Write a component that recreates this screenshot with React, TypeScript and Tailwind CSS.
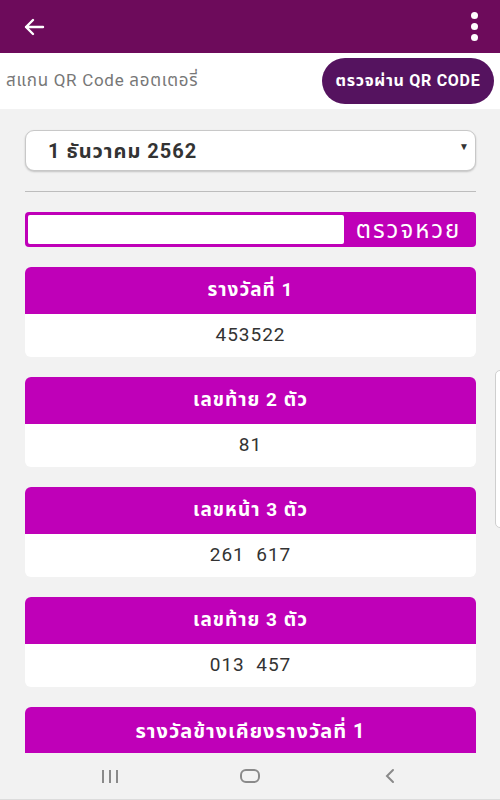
import React from "react";

const cards = [
  { title: "รางวัลที่ 1", value: "453522" },
  { title: "เลขท้าย 2 ตัว", value: "81" },
  { title: "เลขหน้า 3 ตัว", value: "261\u00a0\u00a0617" },
  { title: "เลขท้าย 3 ตัว", value: "013\u00a0\u00a0457" },
];

export default function App() {
  return (
    <div
      className="relative w-[500px] h-[800px] overflow-hidden bg-[#f2f2f2] flex flex-col"
      style={{ fontFamily: 'Roboto, "Noto Sans", "Noto Sans Thai", sans-serif' }}
    >
      {/* top bar */}
      <div className="h-[53px] shrink-0 bg-[#6d0b5b] flex items-center justify-between pl-[23px] pr-[22px]">
        <svg width="22" height="18" viewBox="0 0 22 18" fill="none" stroke="white" strokeWidth="2.4" strokeLinecap="round" strokeLinejoin="round">
          <path d="M20 9H3M10 2L3 9l7 7" />
        </svg>
        <div className="flex flex-col gap-[4px] items-center">
          <span className="w-[7px] h-[7px] rounded-full bg-white" />
          <span className="w-[7px] h-[7px] rounded-full bg-white" />
          <span className="w-[7px] h-[7px] rounded-full bg-white" />
        </div>
      </div>

      {/* qr row */}
      <div className="h-[56px] shrink-0 bg-white flex items-center justify-between pl-[6px] pr-[6px]">
        <span className="text-[17px] text-[#777] tracking-[0.7px]">สแกน QR Code ลอตเตอรี่</span>
        <button className="h-[46px] w-[172px] rounded-full bg-[#55135f] text-white font-bold text-[16px] tracking-[0.7px] flex items-center justify-center">
          ตรวจผ่าน QR CODE
        </button>
      </div>

      {/* content */}
      <div className="flex-1 flex flex-col pl-[25px] pr-[24px] pt-[21px] overflow-hidden">
        <div className="h-[41px] shrink-0 bg-white rounded-[9px] border border-[#c8c8c8] shadow-[0_1px_2px_rgba(0,0,0,0.2)] flex items-center justify-between pl-[22px] pr-[6px]">
          <span className="text-[20px] font-bold text-[#333] tracking-[1px]">1 ธันวาคม 2562</span>
          <span className="text-[10px] text-[#333] -mt-[8px]">▼</span>
        </div>

        <div className="mt-[20px] h-px bg-[#bdbdbd] shrink-0" />

        <div className="mt-[20px] h-[35px] shrink-0 bg-[#bf00b8] rounded-[4px] p-[3px] flex items-stretch">
          <div className="w-[316px] bg-white rounded-[2px]" />
          <div className="flex-1 flex items-center justify-center text-white text-[24px] tracking-[2px] leading-none">ตรวจหวย</div>
        </div>

        <div className="mt-[20px] flex flex-col gap-[20px]">
          {cards.map((c) => (
            <div key={c.title} className="h-[90px] rounded-[6px] overflow-hidden bg-white flex flex-col">
              <div className="h-[47px] bg-[#bf00b8] flex items-center justify-center text-white font-bold text-[19px] tracking-[1px]">
                {c.title}
              </div>
              <div className="flex-1 flex items-center justify-center text-[#333] text-[19px] tracking-[1px]">{c.value}</div>
            </div>
          ))}
          <div className="h-[90px] rounded-[6px] overflow-hidden bg-white flex flex-col">
            <div className="h-[47px] bg-[#bf00b8] flex items-center justify-center text-white font-bold text-[20px] tracking-[1px]">
              รางวัลข้างเคียงรางวัลที่ 1
            </div>
          </div>
        </div>
      </div>

      {/* nav bar */}
      <div className="absolute left-0 right-0 bottom-0 h-[47px] bg-[#f2f2f2] flex items-center justify-center border-b border-[#dcdcdc]">
        <div className="w-[140px] flex justify-center">
          <svg width="20" height="16" viewBox="0 0 20 16" stroke="#8a8a8a" strokeWidth="2">
            <path d="M3 2v13M10 2v13M17 2v13" />
          </svg>
        </div>
        <div className="w-[140px] flex justify-center">
          <svg width="22" height="16" viewBox="0 0 22 16" fill="none" stroke="#8a8a8a" strokeWidth="2">
            <rect x="2" y="2" width="18" height="12" rx="5" />
          </svg>
        </div>
        <div className="w-[140px] flex justify-center">
          <svg width="14" height="16" viewBox="0 0 14 16" fill="none" stroke="#8a8a8a" strokeWidth="2" strokeLinecap="round">
            <path d="M10 2L4 8l6 6" />
          </svg>
        </div>
      </div>

      {/* edge handle */}
      <div className="absolute left-[495px] top-[370px] w-[20px] h-[158px] bg-white border border-[#cfcfcf] rounded-[5px]" />
    </div>
  );
}
